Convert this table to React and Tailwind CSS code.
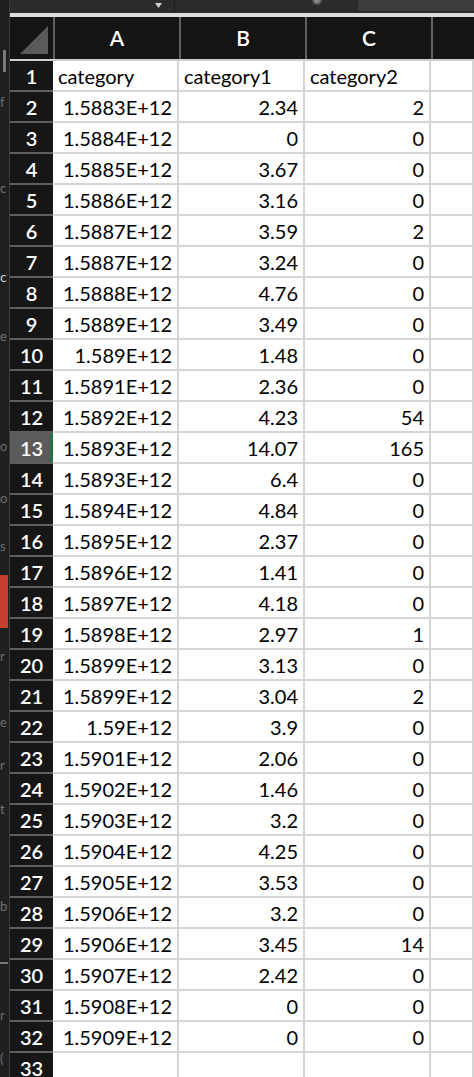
const rows = [
  ['1.5883E+12', '2.34', '2'],
  ['1.5884E+12', '0', '0'],
  ['1.5885E+12', '3.67', '0'],
  ['1.5886E+12', '3.16', '0'],
  ['1.5887E+12', '3.59', '2'],
  ['1.5887E+12', '3.24', '0'],
  ['1.5888E+12', '4.76', '0'],
  ['1.5889E+12', '3.49', '0'],
  ['1.589E+12', '1.48', '0'],
  ['1.5891E+12', '2.36', '0'],
  ['1.5892E+12', '4.23', '54'],
  ['1.5893E+12', '14.07', '165'],
  ['1.5893E+12', '6.4', '0'],
  ['1.5894E+12', '4.84', '0'],
  ['1.5895E+12', '2.37', '0'],
  ['1.5896E+12', '1.41', '0'],
  ['1.5897E+12', '4.18', '0'],
  ['1.5898E+12', '2.97', '1'],
  ['1.5899E+12', '3.13', '0'],
  ['1.5899E+12', '3.04', '2'],
  ['1.59E+12', '3.9', '0'],
  ['1.5901E+12', '2.06', '0'],
  ['1.5902E+12', '1.46', '0'],
  ['1.5903E+12', '3.2', '0'],
  ['1.5904E+12', '4.25', '0'],
  ['1.5905E+12', '3.53', '0'],
  ['1.5906E+12', '3.2', '0'],
  ['1.5906E+12', '3.45', '14'],
  ['1.5907E+12', '2.42', '0'],
  ['1.5908E+12', '0', '0'],
  ['1.5909E+12', '0', '0'],
]

// faint letters of the window behind, at the left edge
const ghosts = [
  { t: 'f', y: 96 },
  { t: 'c', y: 182 },
  { t: 'e', y: 330 },
  { t: 'o', y: 440 },
  { t: 'o', y: 492 },
  { t: 's', y: 540 },
  { t: 'r', y: 650 },
  { t: 'e', y: 716 },
  { t: 'r', y: 759 },
  { t: 't', y: 803 },
  { t: 'b', y: 900 },
  { t: 'r', y: 1009 },
  { t: '(', y: 1052 },
]

const grid = 'grid shrink-0 grid-cols-[43px_126px_126px_126px_1fr]'
const cell = 'h-[31px] bg-white border-r-2 border-b-2 border-[#d6d6d6] px-[5px] flex items-center text-black text-[20px] leading-none'

function RowHead({ n, active }) {
  return (
    <div
      className={
        'relative h-[31px] flex items-center justify-center border-b-2 border-[#5e5e5e] text-white text-[20px] font-semibold leading-none ' +
        (active ? 'bg-[#5b5b5b]' : 'bg-[#161616]')
      }
    >
      {n}
      {active && <span className="absolute right-0 top-0 bottom-0 w-[3px] bg-[#217346]" />}
    </div>
  )
}

export default function App() {
  return (
    <div className="flex h-[1077px] w-[474px] overflow-hidden bg-[#1c1c1c] font-['Lato','Liberation_Sans',sans-serif]">
      <div className="relative w-[10px] shrink-0 overflow-hidden bg-[#1f1f1f] border-r border-[#3a3a3a]">
        <span className="absolute left-[3px] top-[50px] h-[22px] w-[3px] bg-[#7a7a7a]" />
        <span className="absolute left-0 top-[270px] text-[14px] leading-none text-[#d0d0d0]">c</span>
        <span className="absolute left-0 top-[575px] h-[53px] w-[8px] bg-[#c2402c]" />
        <span className="absolute left-0 top-[962px] h-[2px] w-[8px] bg-[#777]" />
        {ghosts.map((g) => (
          <span
            key={g.y}
            className="absolute left-0 text-[13px] leading-none text-[#6f6f6f]"
            style={{ top: g.y }}
          >
            {g.t}
          </span>
        ))}
      </div>

      <div className="flex-1 flex flex-col">
        <div className="relative h-[13px] shrink-0 flex bg-[#2b2b2b]">
          <div className="w-[165px] border-r border-[#1c1c1c] relative">
            <svg className="absolute left-[145px] top-[2px]" width="7" height="7" viewBox="0 0 7 7">
              <path d="M0 1 L7 1 L3.5 6 Z" fill="#cfcfcf" />
            </svg>
          </div>
          <div className="relative flex-1">
            <span className="absolute left-[138px] top-[-4px] h-[8px] w-[8px] rounded-full bg-[#8c8c8c] blur-[1px]" />
            <div className="absolute right-0 top-0 h-[11px] w-[116px] rounded-bl-[3px] bg-[#3b3b3b]" />
          </div>
        </div>
        <div className="h-[4px] shrink-0 bg-[#dcdcdc]" />

        <div className={grid + ' h-[44px] bg-[#141414] border-b-2 border-[#cfcfcf]'}>
          <div className="relative">
            <svg className="absolute left-[10px] top-[9px]" width="28" height="28" viewBox="0 0 28 28">
              <path d="M28 0 L28 28 L0 28 Z" fill="#595959" />
            </svg>
          </div>
          {['A', 'B', 'C', ''].map((c, i) => (
            <div
              key={i}
              className="flex items-center justify-center border-l-2 border-[#5f5f5f] text-white text-[21px] font-semibold"
            >
              {c}
            </div>
          ))}
        </div>

        <div className={grid}>
          <RowHead n={1} />
          <div className={cell}>category</div>
          <div className={cell}>category1</div>
          <div className={cell}>category2</div>
          <div className={cell} />
          {rows.map((r, i) => (
            <div key={i} className="contents">
              <RowHead n={i + 2} active={i + 2 === 13} />
              <div className={cell + ' justify-end'}>{r[0]}</div>
              <div className={cell + ' justify-end'}>{r[1]}</div>
              <div className={cell + ' justify-end'}>{r[2]}</div>
              <div className={cell} />
            </div>
          ))}
          <RowHead n={33} />
          <div className={cell} />
          <div className={cell} />
          <div className={cell} />
          <div className={cell} />
        </div>
      </div>
    </div>
  )
}
